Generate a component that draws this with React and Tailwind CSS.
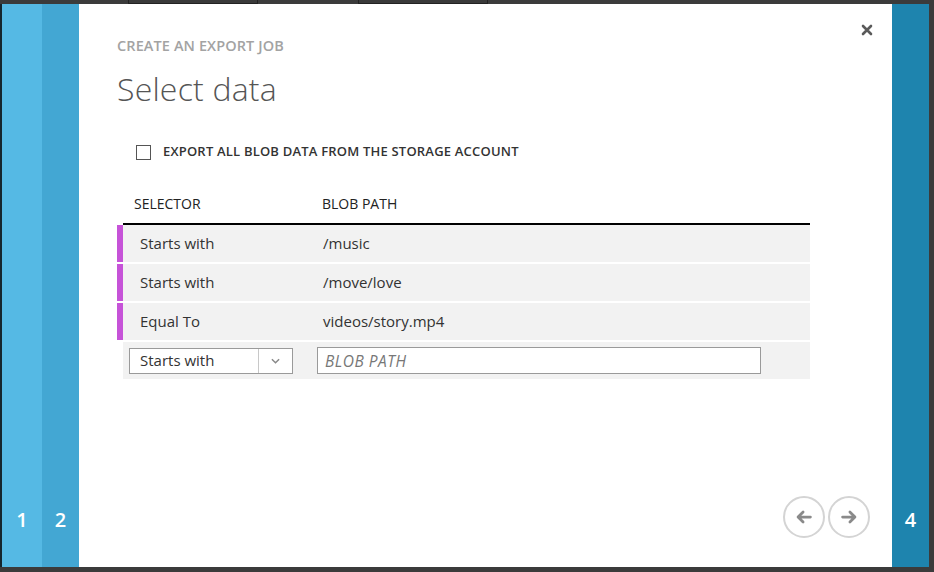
import React from 'react';

const rows = [
    { selector: 'Starts with', path: '/music' },
    { selector: 'Starts with', path: '/move/love' },
    { selector: 'Equal To', path: 'videos/story.mp4' },
];

const Arrow = ({ dir }) => (
    <svg viewBox="0 0 24 24" className="w-[22px] h-[22px]" fill="none" stroke="#8a8a8a" strokeWidth="3" strokeLinecap="round" strokeLinejoin="round">
        {dir === 'left' ? (
            <path d="M19 12H6 M11 6.5 5.5 12 11 17.5" />
        ) : (
            <path d="M5 12h13 M13 6.5 18.5 12 13 17.5" />
        )}
    </svg>
);

const App = () => {
    return (
        <div className="w-[934px] h-[572px] bg-[#3b3b3b] flex flex-col overflow-hidden" style={{ fontFamily: '"Open Sans", "Noto Sans", sans-serif' }}>
            {/* top strip from page behind */}
            <div className="h-[4px] flex">
                <div className="w-[128px]" />
                <div className="w-[130px] border-x border-b border-[#222] bg-[#3a3a3a]" />
                <div className="w-[100px]" />
                <div className="w-[130px] border-x border-b border-[#222] bg-[#3a3a3a]" />
            </div>

            <div className="h-[563px] flex">
                <div className="w-[2px] bg-[#15262e]" />
                <div className="w-[40px] bg-[#55b9e4] flex items-end justify-center pb-[32px] text-white text-[20px] font-semibold">1</div>
                <div className="w-[37px] bg-[#43a7d3] flex items-end justify-center pb-[32px] text-white text-[20px] font-semibold">2</div>

                {/* wizard dialog */}
                <div className="w-[813px] bg-white relative flex flex-col pl-[38px] pt-[33px]">
                    <button className="absolute top-[20px] right-[19px] w-[12px] h-[12px]">
                        <svg viewBox="0 0 12 12" className="w-[12px] h-[12px]" stroke="#5a5a5a" strokeWidth="2.6" strokeLinecap="round">
                            <path d="M2 2l8 8M10 2l-8 8" />
                        </svg>
                    </button>

                    <div className="text-[14.5px] leading-[18px] font-semibold text-[#a3a3a3] tracking-[0.1px]">CREATE AN EXPORT JOB</div>
                    <h1 className="mt-[14px] text-[32px] leading-[40px] font-light text-[#555] tracking-[0.2px]">Select data</h1>

                    <label className="mt-[35px] ml-[19px] flex items-center h-[16px]">
                        <span className="w-[15px] h-[15px] border border-[#555] bg-white" />
                        <span className="ml-[12px] text-[13px] font-semibold text-[#333] tracking-[0.2px]">EXPORT ALL BLOB DATA FROM THE STORAGE ACCOUNT</span>
                    </label>

                    {/* selector table */}
                    <div className="mt-[34px] w-[693px]">
                        <div className="ml-[6px] flex pb-[9px] border-b-2 border-black text-[14px] leading-[20px] text-[#222]">
                            <div className="w-[199px] pl-[11px]">SELECTOR</div>
                            <div>BLOB PATH</div>
                        </div>

                        <div className="flex flex-col gap-[2px]">
                            {rows.map((row, i) => (
                                <div key={i} className="flex h-[37px]">
                                    <div className="w-[6px] bg-[#c653d8]" />
                                    <div className="flex-1 bg-[#f2f2f2] flex items-center text-[15px] text-[#333]">
                                        <div className="w-[200px] pl-[17px]">{row.selector}</div>
                                        <div>{row.path}</div>
                                    </div>
                                </div>
                            ))}
                            <div className="ml-[6px] h-[37px] bg-[#f2f2f2] flex items-center pl-[6px]">
                                <div className="w-[164px] h-[26px] border border-[#9a9a9a] bg-white flex">
                                    <div className="flex-1 flex items-center pl-[10px] text-[15px] text-[#333]">Starts with</div>
                                    <div className="w-[34px] border-l border-[#c8c8c8] flex items-center justify-center">
                                        <svg viewBox="0 0 10 6" className="w-[9px] h-[6px]" fill="none" stroke="#888" strokeWidth="1.6">
                                            <path d="M1 1l4 4 4-4" />
                                        </svg>
                                    </div>
                                </div>
                                <input
                                    type="text"
                                    placeholder="BLOB PATH"
                                    className="ml-[24px] w-[444px] h-[27px] border border-[#9a9a9a] bg-white px-[7px] text-[15.5px] italic text-[#333] placeholder:text-[#777] outline-none tracking-[0.5px]"
                                />
                            </div>
                        </div>
                    </div>

                    <div className="flex-1" />
                    <div className="flex justify-end gap-[3px] pr-[22px] pb-[29px]">
                        <button className="w-[42px] h-[42px] rounded-full border-2 border-[#d4d4d4] flex items-center justify-center">
                            <Arrow dir="left" />
                        </button>
                        <button className="w-[42px] h-[42px] rounded-full border-2 border-[#d4d4d4] flex items-center justify-center">
                            <Arrow dir="right" />
                        </button>
                    </div>
                </div>

                <div className="w-[37px] bg-[#1e84ae] flex items-end justify-center pb-[32px] text-white text-[20px] font-semibold">4</div>
                <div className="w-[5px] bg-[#3b3b3b]" />
            </div>

            <div className="flex-1 bg-[#3b3b3b]" />
        </div>
    );
};

export default App;
